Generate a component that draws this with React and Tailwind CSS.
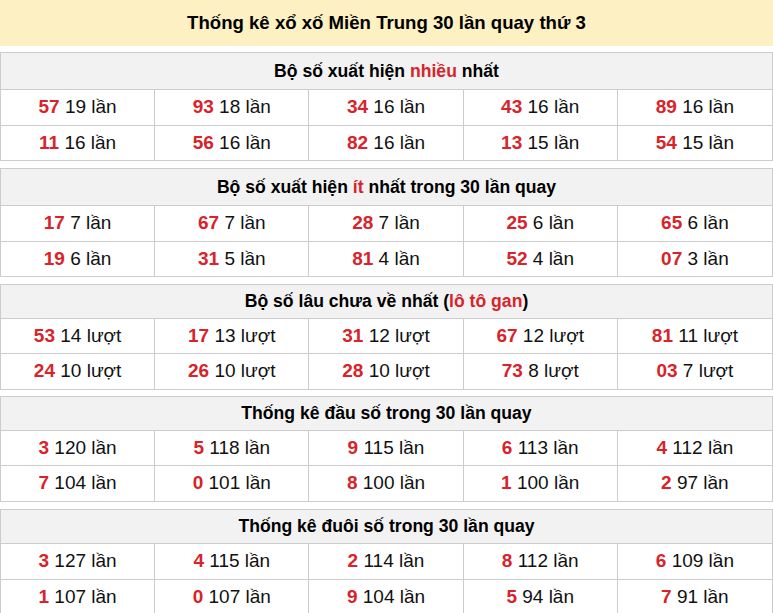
import React from "react";

const tables = [
  {
    title: (
      <>
        Bộ số xuất hiện <span className="text-[#d9232b]">nhiều</span> nhất
      </>
    ),
    titleH: "h-[37px]",
    r1H: "h-[36px]",
    r2H: "h-[34px]",
    mb: "mb-[7px]",
    rows: [
      [["57", "19 lần"], ["93", "18 lần"], ["34", "16 lần"], ["43", "16 lần"], ["89", "16 lần"]],
      [["11", "16 lần"], ["56", "16 lần"], ["82", "16 lần"], ["13", "15 lần"], ["54", "15 lần"]],
    ],
  },
  {
    title: (
      <>
        Bộ số xuất hiện <span className="text-[#d9232b]">ít</span> nhất trong 30 lần quay
      </>
    ),
    titleH: "h-[37px]",
    r1H: "h-[36px]",
    r2H: "h-[34px]",
    mb: "mb-[7px]",
    rows: [
      [["17", "7 lần"], ["67", "7 lần"], ["28", "7 lần"], ["25", "6 lần"], ["65", "6 lần"]],
      [["19", "6 lần"], ["31", "5 lần"], ["81", "4 lần"], ["52", "4 lần"], ["07", "3 lần"]],
    ],
  },
  {
    title: (
      <>
        Bộ số lâu chưa về nhất (<span className="text-[#d9232b]">lô tô gan</span>)
      </>
    ),
    titleH: "h-[34px]",
    r1H: "h-[35px]",
    r2H: "h-[35px]",
    mb: "mb-[6px]",
    rows: [
      [["53", "14 lượt"], ["17", "13 lượt"], ["31", "12 lượt"], ["67", "12 lượt"], ["81", "11 lượt"]],
      [["24", "10 lượt"], ["26", "10 lượt"], ["28", "10 lượt"], ["73", "8 lượt"], ["03", "7 lượt"]],
    ],
  },
  {
    title: <>Thống kê đầu số trong 30 lần quay</>,
    titleH: "h-[34px]",
    r1H: "h-[35px]",
    r2H: "h-[35px]",
    mb: "mb-[7px]",
    rows: [
      [["3", "120 lần"], ["5", "118 lần"], ["9", "115 lần"], ["6", "113 lần"], ["4", "112 lần"]],
      [["7", "104 lần"], ["0", "101 lần"], ["8", "100 lần"], ["1", "100 lần"], ["2", "97 lần"]],
    ],
  },
  {
    title: <>Thống kê đuôi số trong 30 lần quay</>,
    titleH: "h-[34px]",
    r1H: "h-[36px]",
    r2H: "h-[35px]",
    mb: "mb-[7px]",
    rows: [
      [["3", "127 lần"], ["4", "115 lần"], ["2", "114 lần"], ["8", "112 lần"], ["6", "109 lần"]],
      [["1", "107 lần"], ["0", "107 lần"], ["9", "104 lần"], ["5", "94 lần"], ["7", "91 lần"]],
    ],
  },
];

function Table({ t }) {
  return (
    <div className={`${t.mb} border border-[#cccccc] bg-white`}>
      <div
        className={`flex ${t.titleH} items-center justify-center border-b border-[#cccccc] bg-[#f2f2f2] text-[17.6px] font-bold text-black`}
      >
        <span>{t.title}</span>
      </div>
      {t.rows.map((row, ri) => (
        <div
          key={ri}
          className={`grid grid-cols-5 ${ri === 0 ? `${t.r1H} border-b border-[#cccccc]` : t.r2H}`}
        >
          {row.map(([n, v], ci) => (
            <div
              key={ci}
              className={
                ci < 4
                  ? "flex items-center justify-center border-r border-[#cccccc] text-[19px] text-[#111]"
                  : "flex items-center justify-center text-[19px] text-[#111]"
              }
            >
              <span className="font-bold text-[#d9232b]">{n}</span>
              <span>&nbsp;{v}</span>
            </div>
          ))}
        </div>
      ))}
    </div>
  );
}

export default function App() {
  return (
    <div
      className="w-[773px] bg-white"
      style={{ fontFamily: '"Liberation Sans", Arial, sans-serif' }}
    >
      <div className="flex h-[46px] items-center justify-center bg-[#fdf0c2] text-[18.6px] font-bold text-black">
        Thống kê xổ xố Miền Trung 30 lần quay thứ 3
      </div>
      <div className="mt-[6px]">
        {tables.map((t, i) => (
          <Table key={i} t={t} />
        ))}
      </div>
    </div>
  );
}
